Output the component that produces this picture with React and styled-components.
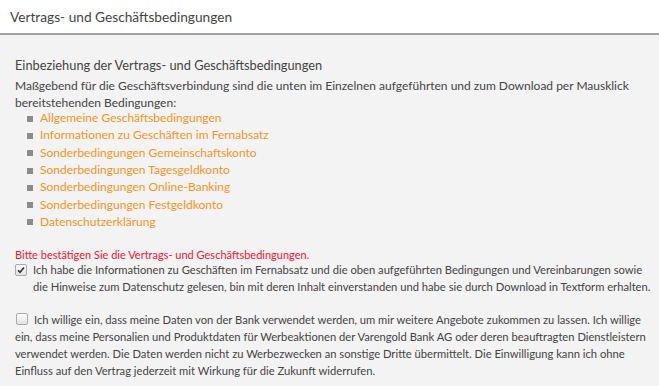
import styled, { createGlobalStyle } from "styled-components";

const GlobalStyle = createGlobalStyle`
  html, body {
    margin: 0;
    padding: 0;
    background: #f3f3f3;
  }
  body {
    font-family: Lato, "Open Sans", sans-serif;
    color: #444;
  }
`;

const Page = styled.div`
  width: 659px;
  min-height: 386px;
  background: #f3f3f3;
`;

const Header = styled.div`
  height: 33px;
  background: #fff;
  border-bottom: 2px solid #a3a3a3;
  padding: 0 10px;
  display: flex;
  align-items: center;
  h1 {
    margin: 0;
    font-size: 13.7px;
    font-weight: 400;
    color: #444;
  }
`;

const Body = styled.div`
  padding: 21px 2px 0 15px;
`;

const Heading = styled.h2`
  margin: 0 0 3px;
  font-size: 12.8px;
  font-weight: 400;
  color: #444;
  line-height: 18px;
`;

const Text = styled.p`
  margin: 0;
  font-size: 12px;
  line-height: 17px;
  color: #444;
`;

const List = styled.ul`
  list-style: none;
  margin: -2px 0 0;
  padding: 0 0 0 12px;
`;

const Item = styled.li`
  display: flex;
  align-items: center;
  gap: 7px;
  height: 17.3px;
  font-size: 12px;
  &::before {
    content: "";
    width: 6px;
    height: 6px;
    margin-top: 2px;
    background: #8c8c8c;
  }
  a {
    color: #f7941d;
    text-decoration: none;
  }
`;

const Error = styled.div`
  margin-top: 18px;
  font-size: 11px;
  line-height: 13px;
  color: #ff1030;
`;

const Check = styled.label`
  display: flex;
  gap: 6px;
  font-size: 11.2px;
  line-height: 17px;
  color: #444;
`;

const Box = styled.span`
  flex: none;
  width: 10px;
  height: 10px;
  margin-top: 3px;
  border: 1px solid #aaa;
  border-radius: 2px;
  background: linear-gradient(#fdfdfd, #e2e2e2);
  display: flex;
  align-items: center;
  justify-content: center;
`;

const InlineBox = styled(Box)`
  display: inline-block;
  vertical-align: -1px;
  margin: 0 6px 0 1px;
`;

const Para = styled.p`
  margin: ${(p) => p.$top || 0}px 0 0;
  font-size: 11.2px;
  line-height: 17px;
  color: #444;
`;

const links = [
  "Allgemeine Geschäftsbedingungen",
  "Informationen zu Geschäften im Fernabsatz",
  "Sonderbedingungen Gemeinschaftskonto",
  "Sonderbedingungen Tagesgeldkonto",
  "Sonderbedingungen Online-Banking",
  "Sonderbedingungen Festgeldkonto",
  "Datenschutzerklärung",
];

export default function App() {
  return (
    <Page>
      <GlobalStyle />
      <Header>
        <h1>Vertrags- und Geschäftsbedingungen</h1>
      </Header>
      <Body>
        <Heading>Einbeziehung der Vertrags- und Geschäftsbedingungen</Heading>
        <Text>
          Maßgebend für die Geschäftsverbindung sind die unten im Einzelnen aufgeführten und zum Download per Mausklick
          bereitstehenden Bedingungen:
        </Text>
        <List>
          {links.map((l) => (
            <Item key={l}>
              <a href="#">{l}</a>
            </Item>
          ))}
        </List>
        <Error>Bitte bestätigen Sie die Vertrags- und Geschäftsbedingungen.</Error>
        <Check>
          <Box>
            <svg width="8" height="8" viewBox="0 0 8 8">
              <path d="M1 4.2 L3 6.3 L7 1.5" fill="none" stroke="#333" strokeWidth="1.6" />
            </svg>
          </Box>
          <span>
            Ich habe die Informationen zu Geschäften im Fernabsatz und die oben aufgeführten Bedingungen und Vereinbarungen sowie
            <br />
            die Hinweise zum Datenschutz gelesen, bin mit deren Inhalt einverstanden und habe sie durch Download in Textform erhalten.
          </span>
        </Check>
        <Para $top={16}>
          <InlineBox />
          Ich willige ein, dass meine Daten von der Bank verwendet werden, um mir weitere Angebote zukommen zu lassen. Ich willige
          <br />
          ein, dass meine Personalien und Produktdaten für Werbeaktionen der Varengold Bank AG oder deren beauftragten Dienstleistern
          <br />
          verwendet werden. Die Daten werden nicht zu Werbezwecken an sonstige Dritte übermittelt. Die Einwilligung kann ich ohne
          <br />
          Einfluss auf den Vertrag jederzeit mit Wirkung für die Zukunft widerrufen.
        </Para>
      </Body>
    </Page>
  );
}
